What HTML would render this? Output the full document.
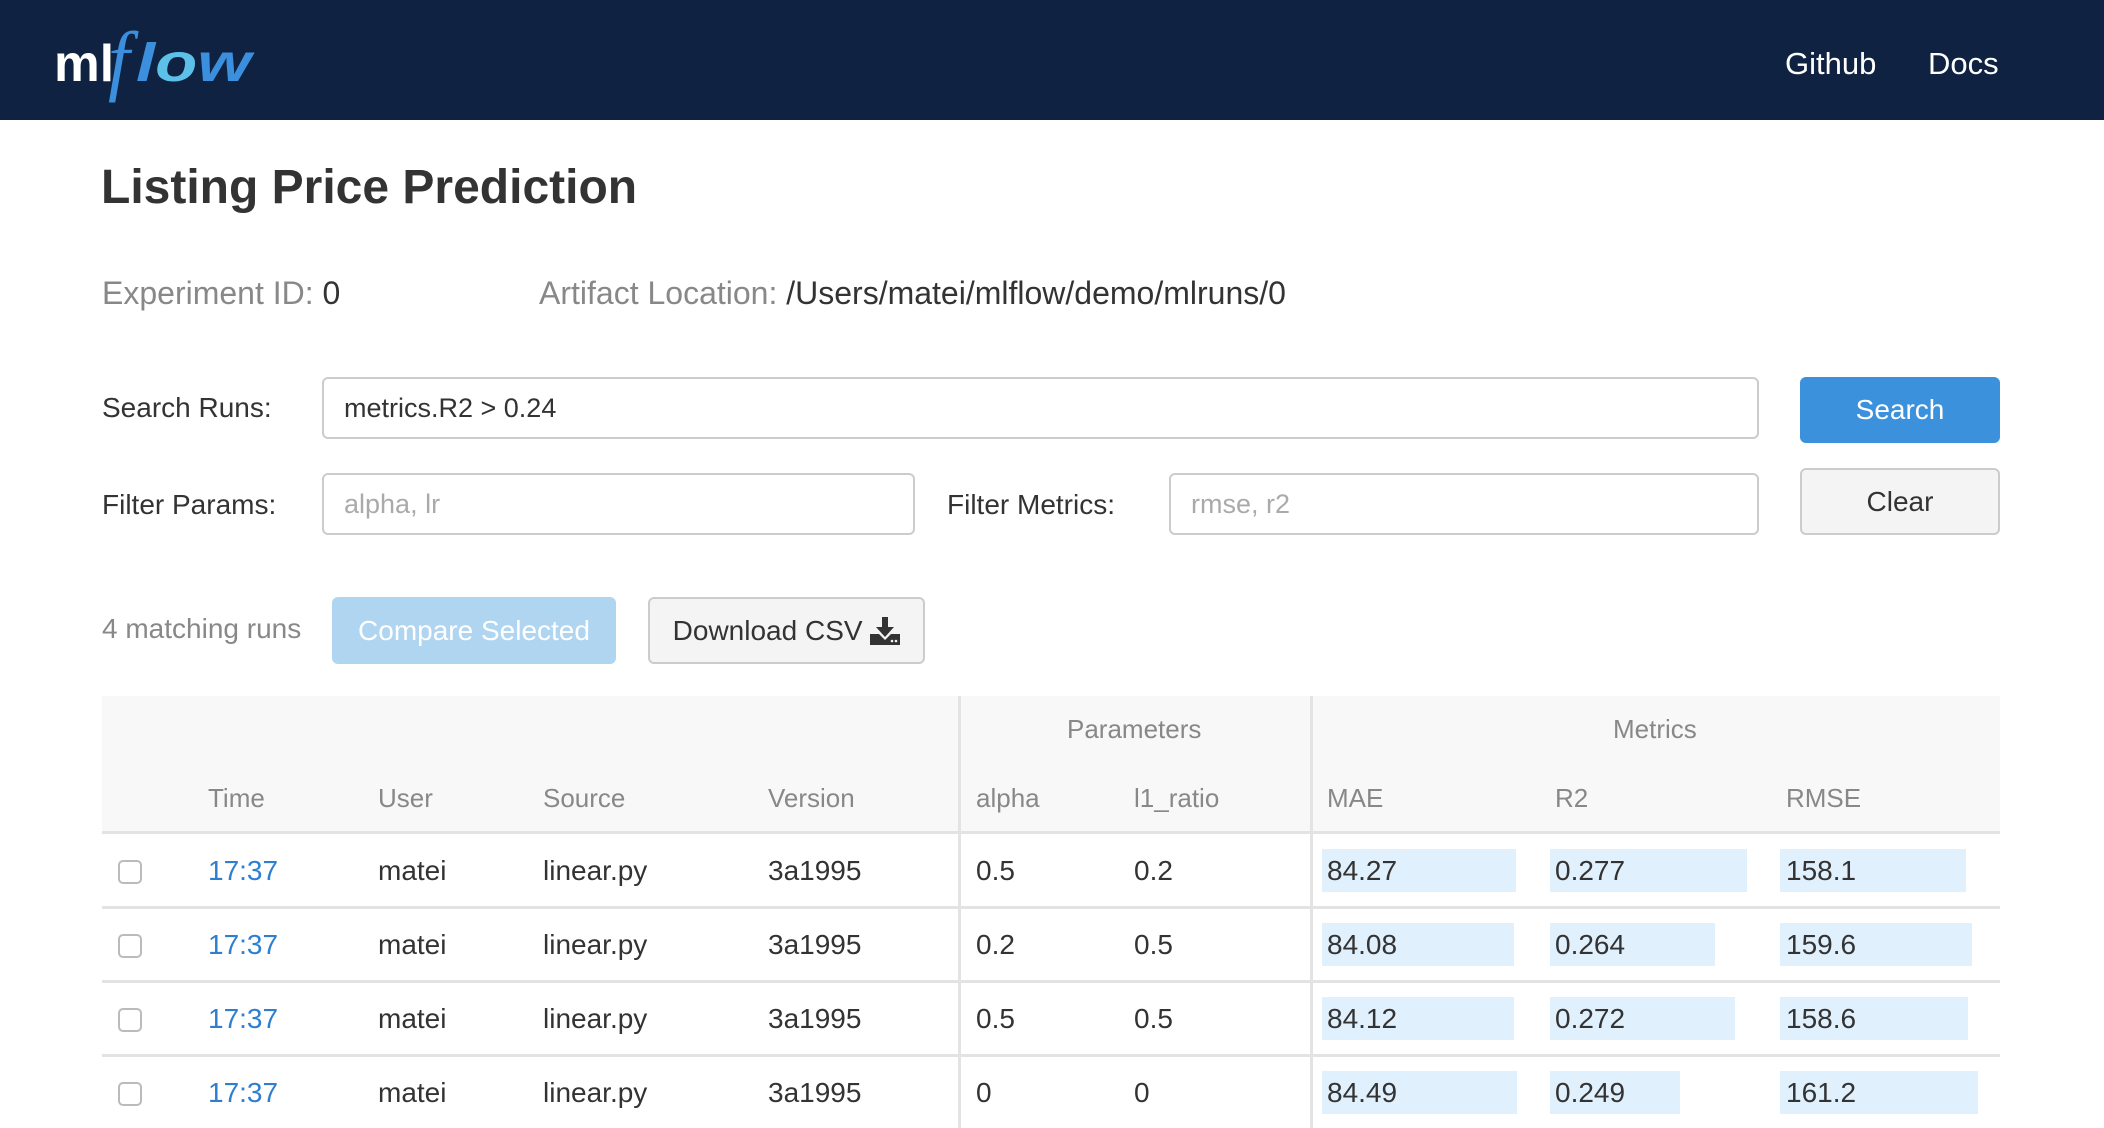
<!DOCTYPE html>
<html><head><meta charset="utf-8"><style>
*{box-sizing:border-box;margin:0;padding:0}
body{width:2104px;height:1128px;overflow:hidden;background:#fff;font-family:"Liberation Sans",Arial,sans-serif;color:#333;position:relative}
.a{position:absolute;white-space:nowrap}
.hdr{position:absolute;left:0;top:0;width:2104px;height:120px;background:#0f2241}
.nav{color:#fff;font-size:31px;top:46px}
.lbl{font-size:28px;color:#333}
.inp{position:absolute;border:2px solid #ccc;border-radius:6px;background:#fff;font-size:27px;padding-left:20px;display:flex;align-items:center}
.btn{position:absolute;border-radius:6px;display:flex;align-items:center;justify-content:center;font-size:28px}
.th{font-size:26px;color:#888}
.td{font-size:28px;color:#333}
.bar{position:absolute;background:#e0f0fd;height:43px}
.cb{position:absolute;left:118px;width:24px;height:24px;border:2px solid #bbb;border-radius:5px;background:#fff}
.hl{position:absolute;left:102px;width:1898px;height:3px;background:#e3e3e3}
.vl{position:absolute;width:3px;background:#e3e3e3;top:696px;height:432px}
</style></head><body>
<div class="hdr"></div>
<svg class="a" style="left:0;top:0" width="300" height="120">
<text x="54" y="81" font-family="Liberation Sans,sans-serif" font-size="52" font-weight="bold" fill="#fff" textLength="60" lengthAdjust="spacingAndGlyphs">ml</text>
<text x="108" y="86" font-family="Liberation Serif,serif" font-size="78" font-style="italic" fill="#3b8fdd">f</text>
<text x="136" y="81" font-family="Liberation Sans,sans-serif" font-size="54" font-style="italic" font-weight="bold" fill="#3b8fdd" textLength="115" lengthAdjust="spacingAndGlyphs">l<tspan fill="#5cc0e8">o</tspan>w</text>
</svg>
<div class="a nav" style="left:1785px">Github</div>
<div class="a nav" style="left:1928px">Docs</div>

<div class="a" style="left:101px;top:160px;font-size:48px;font-weight:bold;color:#333">Listing Price Prediction</div>
<div class="a" style="left:102px;top:275px;font-size:32px;color:#888">Experiment ID: <span style="color:#333">0</span></div>
<div class="a" style="left:539px;top:275px;font-size:32px;color:#888">Artifact Location: <span style="color:#333">/Users/matei/mlflow/demo/mlruns/0</span></div>

<div class="a lbl" style="left:102px;top:392px">Search Runs:</div>
<div class="inp" style="left:322px;top:377px;width:1437px;height:62px;color:#333">metrics.R2 &gt; 0.24</div>
<div class="btn" style="left:1800px;top:377px;width:200px;height:66px;background:#3b91dc;color:#fff">Search</div>

<div class="a lbl" style="left:102px;top:489px">Filter Params:</div>
<div class="inp" style="left:322px;top:473px;width:593px;height:62px;color:#aaa">alpha, lr</div>
<div class="a lbl" style="left:947px;top:489px">Filter Metrics:</div>
<div class="inp" style="left:1169px;top:473px;width:590px;height:62px;color:#aaa">rmse, r2</div>
<div class="btn" style="left:1800px;top:468px;width:200px;height:67px;background:#f4f4f4;border:2px solid #ccc;color:#333">Clear</div>

<div class="a" style="left:102px;top:613px;font-size:28px;color:#888">4 matching runs</div>
<div class="btn" style="left:332px;top:597px;width:284px;height:67px;background:#b0d5f1;color:#fff">Compare Selected</div>
<div class="btn" style="left:648px;top:597px;width:277px;height:67px;background:#f4f4f4;border:2px solid #ccc;color:#333">Download CSV&nbsp;<svg width="30" height="28" viewBox="0 0 30 28"><path d="M12 0h6v10h6l-9 10-9-10h6z" fill="#333"/><path d="M0 17h9l6 6 6-6h9v11H0z" fill="#333"/><circle cx="22" cy="24" r="1.3" fill="#f4f4f4"/><circle cx="26" cy="24" r="1.3" fill="#f4f4f4"/></svg></div>

<div class="a" style="left:102px;top:696px;width:1898px;height:137px;background:#f8f8f8"></div>
<div class="hl" style="top:831px"></div>
<div class="hl" style="top:906px"></div>
<div class="hl" style="top:980px"></div>
<div class="hl" style="top:1054px"></div>
<div class="vl" style="left:958px"></div>
<div class="vl" style="left:1310px"></div>
<div class="a th" style="left:1067px;top:714px">Parameters</div>
<div class="a th" style="left:1613px;top:714px">Metrics</div>
<div class="a th" style="left:208px;top:783px">Time</div>
<div class="a th" style="left:378px;top:783px">User</div>
<div class="a th" style="left:543px;top:783px">Source</div>
<div class="a th" style="left:768px;top:783px">Version</div>
<div class="a th" style="left:976px;top:783px">alpha</div>
<div class="a th" style="left:1134px;top:783px">l1_ratio</div>
<div class="a th" style="left:1327px;top:783px">MAE</div>
<div class="a th" style="left:1555px;top:783px">R2</div>
<div class="a th" style="left:1786px;top:783px">RMSE</div>

<div class="bar" style="left:1322px;top:849px;width:194px"></div>
<div class="bar" style="left:1550px;top:849px;width:197px"></div>
<div class="bar" style="left:1780px;top:849px;width:186px"></div>
<div class="bar" style="left:1322px;top:923px;width:192px"></div>
<div class="bar" style="left:1550px;top:923px;width:165px"></div>
<div class="bar" style="left:1780px;top:923px;width:192px"></div>
<div class="bar" style="left:1322px;top:997px;width:192px"></div>
<div class="bar" style="left:1550px;top:997px;width:185px"></div>
<div class="bar" style="left:1780px;top:997px;width:188px"></div>
<div class="bar" style="left:1322px;top:1071px;width:195px"></div>
<div class="bar" style="left:1550px;top:1071px;width:130px"></div>
<div class="bar" style="left:1780px;top:1071px;width:198px"></div>

<div class="cb" style="top:860px"></div>
<div class="cb" style="top:934px"></div>
<div class="cb" style="top:1008px"></div>
<div class="cb" style="top:1082px"></div>

<div class="a td" style="left:208px;top:855px;color:#2e7fd0">17:37</div><div class="a td" style="left:378px;top:855px">matei</div><div class="a td" style="left:543px;top:855px">linear.py</div><div class="a td" style="left:768px;top:855px">3a1995</div><div class="a td" style="left:976px;top:855px">0.5</div><div class="a td" style="left:1134px;top:855px">0.2</div><div class="a td" style="left:1327px;top:855px">84.27</div><div class="a td" style="left:1555px;top:855px">0.277</div><div class="a td" style="left:1786px;top:855px">158.1</div>
<div class="a td" style="left:208px;top:929px;color:#2e7fd0">17:37</div><div class="a td" style="left:378px;top:929px">matei</div><div class="a td" style="left:543px;top:929px">linear.py</div><div class="a td" style="left:768px;top:929px">3a1995</div><div class="a td" style="left:976px;top:929px">0.2</div><div class="a td" style="left:1134px;top:929px">0.5</div><div class="a td" style="left:1327px;top:929px">84.08</div><div class="a td" style="left:1555px;top:929px">0.264</div><div class="a td" style="left:1786px;top:929px">159.6</div>
<div class="a td" style="left:208px;top:1003px;color:#2e7fd0">17:37</div><div class="a td" style="left:378px;top:1003px">matei</div><div class="a td" style="left:543px;top:1003px">linear.py</div><div class="a td" style="left:768px;top:1003px">3a1995</div><div class="a td" style="left:976px;top:1003px">0.5</div><div class="a td" style="left:1134px;top:1003px">0.5</div><div class="a td" style="left:1327px;top:1003px">84.12</div><div class="a td" style="left:1555px;top:1003px">0.272</div><div class="a td" style="left:1786px;top:1003px">158.6</div>
<div class="a td" style="left:208px;top:1077px;color:#2e7fd0">17:37</div><div class="a td" style="left:378px;top:1077px">matei</div><div class="a td" style="left:543px;top:1077px">linear.py</div><div class="a td" style="left:768px;top:1077px">3a1995</div><div class="a td" style="left:976px;top:1077px">0</div><div class="a td" style="left:1134px;top:1077px">0</div><div class="a td" style="left:1327px;top:1077px">84.49</div><div class="a td" style="left:1555px;top:1077px">0.249</div><div class="a td" style="left:1786px;top:1077px">161.2</div>
</body></html>
